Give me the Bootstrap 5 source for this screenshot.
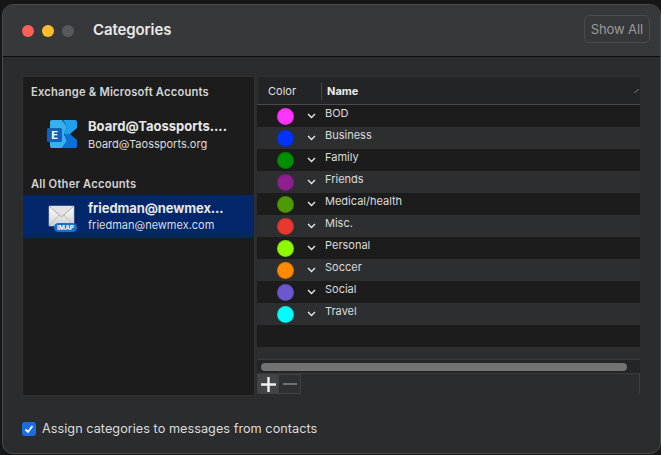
<!DOCTYPE html>
<html lang="en"><head><meta charset="utf-8"><title>Categories</title>
<link href="https://cdn.jsdelivr.net/npm/bootstrap@5.3.0/dist/css/bootstrap.min.css" rel="stylesheet">
<style>
html,body{height:100%;overflow:hidden}
body{background:#161616;font-family:Inter,"Liberation Sans",sans-serif;color:#e3e3e3;padding:4px 0 1px 2px}
.win{height:450px;width:659px;background:#2b2c2e;border:1px solid #4a4b4d;border-radius:11px;overflow:hidden}
.tbar{height:52px;background:#37383a;border-bottom:1px solid #0d0d0d;padding:0 10px 3px 19px;flex:none}
.tl{width:12px;height:12px;border-radius:50%;margin-top:3px}
.ttl{font-size:15px;font-weight:600;color:#e9e9e9;margin:3px 0 0 19px;letter-spacing:-.1px}
.showall{font-size:13px;color:#9a9a9b;border:1px solid #4a4b4d;border-radius:5px;height:28px;padding:0 6px;line-height:26px;background:#37383a;letter-spacing:-.1px}
.wbody{padding:19px 20px 0 19px;height:339px;flex:none}
.lpane{width:233px;height:320px;background:#1c1c1d;border:1px solid #313234;flex:none}
.grp{font-size:11.2px;font-weight:600;color:#d4d4d4;padding-left:8px;line-height:14px;letter-spacing:.2px}
.acct{height:56px;padding-left:24px}
.acct-sel{background:#012669}
.aic{width:30px;flex:none;margin-right:11px}
.an{font-size:13px;font-weight:700;color:#e8e8e8;line-height:16px;white-space:nowrap}
.am{font-size:11px;color:#dedede;line-height:15px;margin-top:3px;white-space:nowrap}
.rpane{margin-left:2px;width:383px;height:320px;flex:none}
.thead{height:29px;background:#232427;border:1px solid #303134;border-right:0;border-bottom:1px solid #4a4b4d;font-size:11px;padding-top:1px}
.th1{width:63px;padding-left:10px;color:#e0e0e0}
.th2{border-left:1px solid #47484a;height:17px;line-height:17px;padding-left:5px;font-weight:700;color:#ececec;flex:1}
.sort{width:6px;height:4px;margin-right:0}
.trow{height:22px;background:#1c1c1d;font-size:11px;color:#dcdcdc;padding-left:20px}
.trow.alt{background:#2d2e30}
.dot{width:17px;height:17px;border-radius:50%;margin-top:3px;border:1px solid rgba(0,0,0,.12);flex:none}
.chev{width:9px;height:6px;margin:8px 0 0 13px;flex:none}
.nm{margin-left:9px;line-height:17px;margin-top:0}
.fill1{height:12px;background:#2d2e30}
.sbar{height:15px;background:#242527;border-top:1px solid #3a3b3d;border-bottom:1px solid #3a3b3d;padding:3px 13px 0 4px}
.thumb{height:8px;background:#737373;border-radius:4px}
.pm{width:22px;height:20px;border:1px solid #404143;background:#434446;color:#eee}
.pm+.pm{background:#2f3032;border-left:0;width:22px}
.rest{height:20px;border-right:1px solid #3c3d3f}
.foot{padding-left:19px;margin-top:23px}
.cb{width:14px;height:14px;border-radius:3px;background:#1a6ee0;flex:none}
.cbl{font-size:12.7px;color:#dcdcdc;margin-left:6px;letter-spacing:.03px}
</style></head>
<body>
<div class="win d-flex flex-column">
  <div class="tbar d-flex align-items-center">
    <span class="tl" style="background:#fe5f57"></span>
    <span class="tl ms-2" style="background:#febc2e"></span>
    <span class="tl ms-2" style="background:#58595b"></span>
    <span class="ttl">Categories</span>
    <span class="showall ms-auto">Show All</span>
  </div>
  <div class="wbody d-flex">
    <div class="lpane">
      <div class="grp" style="margin-top:8px">Exchange &amp; Microsoft Accounts</div>
      <div class="acct d-flex align-items-center" style="margin-top:8px">
        <svg class="aic" viewBox="0 0 30 28" height="28" style="margin-top:-3px"><path d="M3 2Q3 0 5 0H15L20 7 17 14 20 21 15 28H5Q3 28 3 26Z" fill="#35b1f0"/><path d="M16 0H28Q30 0 30 2V8L23 14H17L20 7Z" fill="#1f9fec"/><path d="M17 14H23L30 20V26Q30 28 28 28H15L20 21Z" fill="#0a72d6"/><rect x="0" y="8" width="15" height="14" rx="1.500" fill="#1260bd"/><text x="7.500" y="19" text-anchor="middle" font-size="11" font-weight="700" fill="#fff" font-family="Inter,sans-serif">E</text></svg>
        <div><div class="an">Board@Taossports....</div><div class="am">Board@Taossports.org</div></div>
      </div>
      <div class="grp" style="margin-top:14px;margin-bottom:4px">All Other Accounts</div>
      <div class="acct acct-sel d-flex align-items-center" style="height:43px">
        <svg class="aic" viewBox="0 0 30 30" height="30"><defs><linearGradient id="env" x1="0" y1="0" x2="0" y2="1"><stop offset="0" stop-color="#ffffff"/><stop offset="1" stop-color="#cfcfcf"/></linearGradient></defs><path d="M2 4h25v20H2z" fill="url(#env)" stroke="#bdbdbd" stroke-width=".6"/><path d="M2 4l12.500 11L27 4" fill="#e2e2e2" stroke="#9a9a9a" stroke-width=".8"/><path d="M2 24l10-11M27 24L17 13" stroke="#b5b5b5" stroke-width=".8"/><rect x="7" y="21" width="23" height="9" rx="4.500" fill="#1d6fc4"/><text x="18.500" y="28.200" text-anchor="middle" font-size="6.600" font-weight="700" fill="#fff" font-family="Inter,sans-serif">IMAP</text></svg>
        <div><div class="an" style="letter-spacing:-.1px">friedman@newmex...</div><div class="am" style="margin-top:2px">friedman@newmex.com</div></div>
      </div>
    </div>
    <div class="rpane">
      <div class="thead d-flex align-items-center">
        <div class="th1">Color</div>
        <div class="th2">Name</div>
        <svg class="sort" viewBox="0 0 6 4"><path d="M0 4l5-4" stroke="#777" fill="none"/></svg>
      </div>
      <div class="trow d-flex"><span class="dot" style="background:#ff34ff"></span><svg class="chev" viewBox="0 0 9 6"><path d="M1 1l3.500 3.500L8 1" stroke="#e6e6e6" stroke-width="1.400" fill="none"/></svg><span class="nm">BOD</span></div>
      <div class="trow alt d-flex"><span class="dot" style="background:#0433ff"></span><svg class="chev" viewBox="0 0 9 6"><path d="M1 1l3.500 3.500L8 1" stroke="#e6e6e6" stroke-width="1.400" fill="none"/></svg><span class="nm">Business</span></div>
      <div class="trow d-flex"><span class="dot" style="background:#008f00"></span><svg class="chev" viewBox="0 0 9 6"><path d="M1 1l3.500 3.500L8 1" stroke="#e6e6e6" stroke-width="1.400" fill="none"/></svg><span class="nm">Family</span></div>
      <div class="trow alt d-flex"><span class="dot" style="background:#8e1f8e"></span><svg class="chev" viewBox="0 0 9 6"><path d="M1 1l3.500 3.500L8 1" stroke="#e6e6e6" stroke-width="1.400" fill="none"/></svg><span class="nm">Friends</span></div>
      <div class="trow d-flex"><span class="dot" style="background:#4e9a06"></span><svg class="chev" viewBox="0 0 9 6"><path d="M1 1l3.500 3.500L8 1" stroke="#e6e6e6" stroke-width="1.400" fill="none"/></svg><span class="nm">Medical/health</span></div>
      <div class="trow alt d-flex"><span class="dot" style="background:#e8392f"></span><svg class="chev" viewBox="0 0 9 6"><path d="M1 1l3.500 3.500L8 1" stroke="#e6e6e6" stroke-width="1.400" fill="none"/></svg><span class="nm">Misc.</span></div>
      <div class="trow d-flex"><span class="dot" style="background:#8efa00"></span><svg class="chev" viewBox="0 0 9 6"><path d="M1 1l3.500 3.500L8 1" stroke="#e6e6e6" stroke-width="1.400" fill="none"/></svg><span class="nm">Personal</span></div>
      <div class="trow alt d-flex"><span class="dot" style="background:#ff8a00"></span><svg class="chev" viewBox="0 0 9 6"><path d="M1 1l3.500 3.500L8 1" stroke="#e6e6e6" stroke-width="1.400" fill="none"/></svg><span class="nm">Soccer</span></div>
      <div class="trow d-flex"><span class="dot" style="background:#6e56cf"></span><svg class="chev" viewBox="0 0 9 6"><path d="M1 1l3.500 3.500L8 1" stroke="#e6e6e6" stroke-width="1.400" fill="none"/></svg><span class="nm">Social</span></div>
      <div class="trow alt d-flex"><span class="dot" style="background:#00fdff"></span><svg class="chev" viewBox="0 0 9 6"><path d="M1 1l3.500 3.500L8 1" stroke="#e6e6e6" stroke-width="1.400" fill="none"/></svg><span class="nm">Travel</span></div>
      <div class="trow"></div>
      <div class="fill1"></div>
      <div class="sbar"><div class="thumb"></div></div>
      <div class="d-flex">
        <div class="pm d-flex align-items-center justify-content-center"><svg width="15" height="15" viewBox="0 0 15 15"><path d="M7.500 0v15M0 7.500h15" stroke="#f0f0f0" stroke-width="2.400"/></svg></div>
        <div class="pm d-flex align-items-center justify-content-center"><svg width="14" height="14" viewBox="0 0 14 14"><path d="M0 7h14" stroke="#6f7072" stroke-width="2"/></svg></div>
        <div class="rest flex-grow-1"></div>
      </div>
    </div>
  </div>
  <div class="foot d-flex align-items-center">
    <span class="cb d-flex align-items-center justify-content-center"><svg width="10" height="10" viewBox="0 0 10 10"><path d="M1.500 5.500l2.500 2.500 4.500-6" stroke="#fff" stroke-width="1.800" fill="none"/></svg></span>
    <span class="cbl">Assign categories to messages from contacts</span>
  </div>
</div>
<script src="https://cdn.jsdelivr.net/npm/bootstrap@5.3.0/dist/js/bootstrap.bundle.min.js"></script>
</body></html>
